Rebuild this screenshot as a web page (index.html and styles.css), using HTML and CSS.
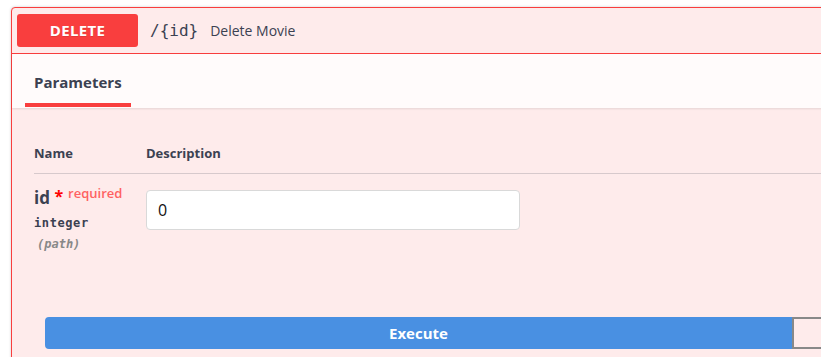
FILE: index.html
```html
<!DOCTYPE html>
<html lang="en">
<head>
    <meta charset="UTF-8">
    <title>DELETE /{id} - Delete Movie</title>
    <link rel="stylesheet" href="styles.css">
</head>
<body>
    <div class="opblock opblock-delete">
        <div class="opblock-summary">
            <span class="method">DELETE</span>
            <span class="path">/{id}</span>
            <span class="summary-desc">Delete Movie</span>
        </div>
        <div class="opblock-body">
            <div class="section-header">
                <div class="tab-item active">Parameters</div>
            </div>
            <div class="parameters">
                <div class="param-row head">
                    <div class="col-name">Name</div>
                    <div class="col-desc">Description</div>
                </div>
                <div class="param-row">
                    <div class="col-name">
                        <div class="param-name">id <span class="star">*</span><span class="req">required</span></div>
                        <div class="param-type">integer</div>
                        <div class="param-in">(path)</div>
                    </div>
                    <div class="col-desc">
                        <input type="text" class="param-input" value="0">
                    </div>
                </div>
            </div>
            <div class="btn-group">
                <button type="button" class="btn execute">Execute</button>
                <button type="button" class="btn clear" aria-label="Clear"></button>
            </div>
        </div>
    </div>
</body>
</html>
```
FILE: styles.css
```css
body { margin: 0; background: #fff; font-family: "Open Sans", sans-serif; color: #3b4151; overflow: hidden; }
.opblock { margin: 7px 0 0 11px; width: 1560px; border: 1px solid #f93e3e; border-radius: 4px; background: #feebeb; box-shadow: 0 0 3px rgba(0,0,0,.19); }
.opblock-summary { display: flex; align-items: center; padding: 6px 5px; border-bottom: 1px solid #f93e3e; }
.method { width: 121px; height: 33px; line-height: 33px; text-align: center; background: #f93e3e; color: #fff; font-size: 15px; font-weight: 700; letter-spacing: .3px; border-radius: 3px; text-shadow: 0 1px 0 rgba(0,0,0,.1); }
.path { margin-left: 12px; font-family: "DejaVu Sans Mono", monospace; font-size: 16px; color: #3b4151; }
.summary-desc { margin-left: 12px; font-size: 14px; color: #3b4151; }
.section-header { display: flex; padding: 0 13px; background: rgba(255,255,255,.8); box-shadow: 0 1px 2px rgba(0,0,0,.1); }
.tab-item { padding: 18px 9px 11px; line-height: 20px; font-size: 15px; font-weight: 700; margin-bottom: 1px; border-bottom: 4px solid #f93e3e; }
.parameters { padding: 37px 0 0 22px; }
.param-row { display: flex; }
.param-row.head { font-size: 13px; font-weight: 700; line-height: 16px; padding-bottom: 12px; border-bottom: 1px solid rgba(59,65,81,.2); }
.col-name { width: 112px; }
.param-row .col-name, .param-row .col-desc { padding-top: 16px; }
.param-row.head .col-name, .param-row.head .col-desc { padding-top: 0; }
.param-name { font-size: 17px; font-weight: 700; line-height: 14px; padding-top: 1px; }
.star { color: #f00; font-size: 16px; position: relative; top: -2px; }
.req { color: #ff6262; font-size: 13px; font-weight: 600; position: relative; top: -6px; margin-left: 5px; }
.param-type { margin-top: 10px; font-family: "DejaVu Sans Mono", monospace; font-size: 12px; font-weight: 700; letter-spacing: .6px; line-height: 14px; }
.param-in { margin-top: 7px; padding-left: 3px; font-family: "DejaVu Sans Mono", monospace; font-size: 12px; font-style: italic; font-weight: 700; color: #888; line-height: 14px; }
.param-input { box-sizing: border-box; width: 374px; height: 40px; padding: 8px 11px; border: 1px solid #d9d9d9; border-radius: 4px; background: #fff; font-family: "Open Sans", sans-serif; font-size: 16px; color: #111; outline: none; }
.btn-group { display: flex; padding: 66px 33px 24px; }
.btn { flex: 1; height: 32px; font-family: "Open Sans", sans-serif; font-size: 15px; font-weight: 700; cursor: pointer; }
.execute { background: #4990e2; border: 2px solid #4990e2; color: #fff; border-radius: 4px 0 0 4px; }
.clear { background: transparent; border: 2px solid #888; color: #3b4151; border-radius: 0 4px 4px 0; }
```
